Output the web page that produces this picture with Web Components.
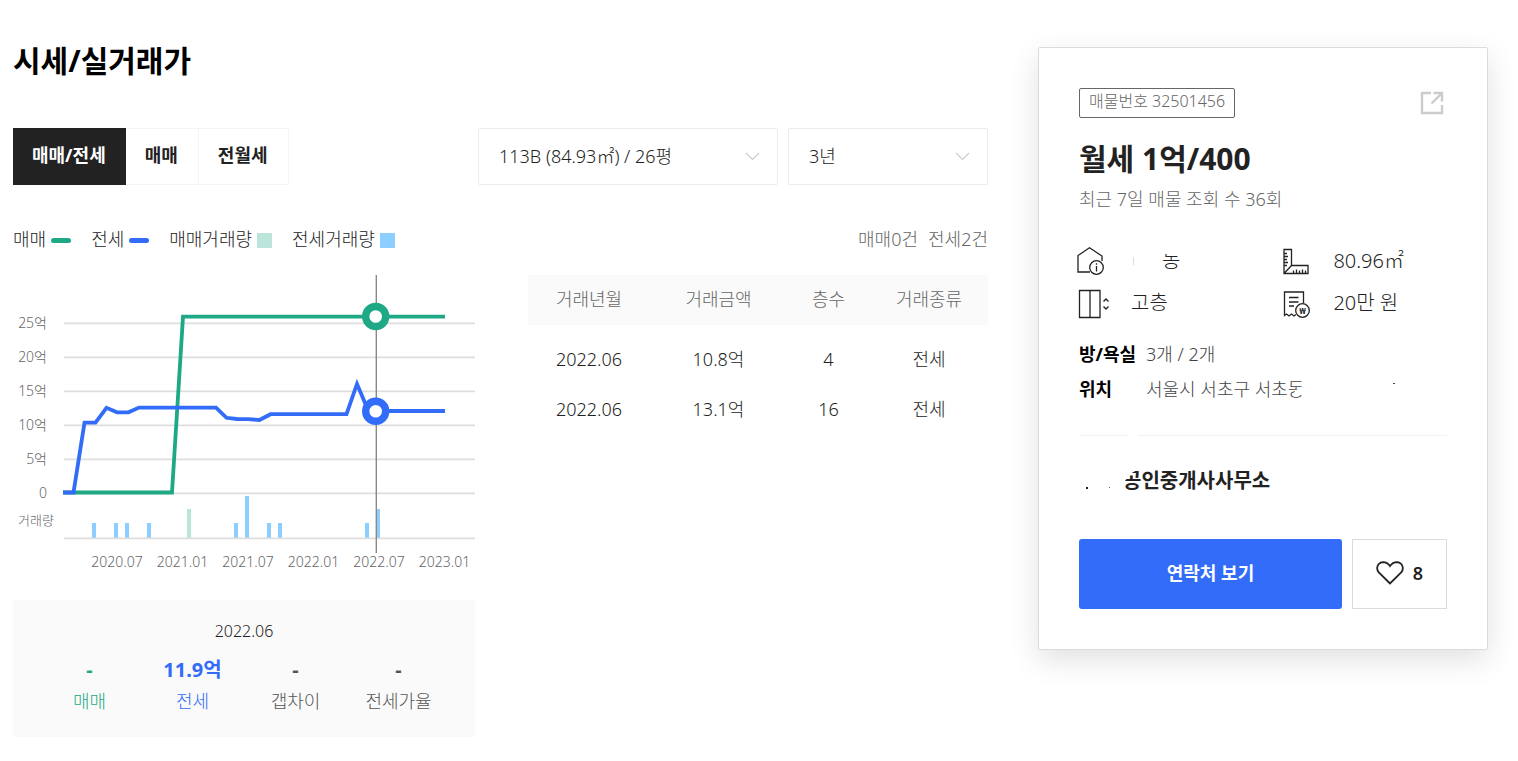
<!DOCTYPE html>
<html lang="ko">
<head>
<meta charset="utf-8">
<title>시세/실거래가</title>
<style>
	body {
		margin: 0;
		background: #fff;
		color: #222;
		font-family: "Noto Sans", "Noto Sans CJK KR", sans-serif;
		font-size: 18px;
		font-weight: 300;
		line-height: 26px;
	}
</style>
</head>
<body>
<estate-page>
	<price-section slot="main"></price-section>
	<listing-card slot="side"></listing-card>
</estate-page>

<script>
(function() {
	function makeTemplate(html) {
		const template = document.createElement("template");
		template.innerHTML = html;
		return template;
	}

	class BaseElement extends HTMLElement {
		constructor() {
			super();
			this._shadowRoot = this.attachShadow({ mode: "open" });
			this._shadowRoot.appendChild(this.constructor.template.content.cloneNode(true));
		}
	}

	// Page: wide content column and a listing card on the right
	class EstatePage extends BaseElement {}
	EstatePage.template = makeTemplate(`
		<style>
		:host {
			display: flex;
			align-items: flex-start;
			gap: 50px;
			padding: 0 30px 24px 13px;
		}
		main {
			flex: 1;
			min-width: 0;
			padding-top: 39px;
		}
		aside {
			flex: 0 0 450px;
			padding-top: 47px;
		}
		</style>
		<main><slot name="main"></slot></main>
		<aside><slot name="side"></slot></aside>
	`);

	class PriceSection extends BaseElement {}
	PriceSection.template = makeTemplate(`
		<style>
		:host { display: block; }
		h2 {
			margin: 0 0 45px;
			color: #000;
			font-size: 30px;
			font-weight: 700;
			line-height: 44px;
		}
		.filters, .selects, .info {
			display: flex;
			gap: 10px;
		}
		.filters, .info { justify-content: space-between; }
		.info { margin: 41px 0 23px; }
		.count {
			display: flex;
			gap: 10px;
			color: #666;
		}
		.body {
			display: grid;
			grid-template-columns: minmax(0, 1fr) 460px;
			align-items: start;
			gap: 53px;
		}
		</style>
		<h2>시세/실거래가</h2>
		<div class="filters">
			<trade-tabs></trade-tabs>
			<div class="selects">
				<select-box label="면적" value="113B (84.93㎡) / 26평" style="--box-width: 300px"></select-box>
				<select-box label="기간" value="3년" style="--box-width: 200px"></select-box>
			</div>
		</div>
		<div class="info">
			<chart-legend></chart-legend>
			<div class="count"><span>매매0건</span><span>전세2건</span></div>
		</div>
		<div class="body">
			<div>
				<price-chart></price-chart>
				<price-summary></price-summary>
			</div>
			<trade-table></trade-table>
		</div>
	`);

	class TradeTabs extends BaseElement {
		constructor() {
			super();
			const tabs = this._shadowRoot.querySelectorAll("button");
			tabs.forEach((tab) => {
				tab.addEventListener("click", () => {
					tabs.forEach((other) => other.setAttribute("aria-pressed", other === tab));
				});
			});
		}
	}
	TradeTabs.template = makeTemplate(`
		<style>
		:host { display: flex; }
		button {
			box-sizing: border-box;
			height: 57px;
			padding: 0 20px 4px 19px;
			border: 1px solid #f4f4f4;
			border-left: 0;
			background: #fff;
			color: #222;
			font: inherit;
			font-weight: 700;
			cursor: pointer;
		}
		button[aria-pressed="true"] {
			padding: 0 19px 4px;
			border-color: #222;
			background: #222;
			color: #fff;
		}
		</style>
		<button type="button" aria-pressed="true">매매/전세</button>
		<button type="button" aria-pressed="false">매매</button>
		<button type="button" aria-pressed="false">전월세</button>
	`);

	class SelectBox extends BaseElement {
		connectedCallback() {
			const select = this._shadowRoot.querySelector("select");
			select.setAttribute("aria-label", this.getAttribute("label"));
			select.querySelector("option").textContent = this.getAttribute("value");
		}
	}
	SelectBox.template = makeTemplate(`
		<style>
		:host {
			display: block;
			position: relative;
			width: var(--box-width);
		}
		select {
			appearance: none;
			box-sizing: border-box;
			width: 100%;
			height: 57px;
			padding: 0 44px 2px 20px;
			border: 1px solid #ebebeb;
			border-radius: 2px;
			background: #fff;
			color: #222;
			font: inherit;
		}
		svg {
			position: absolute;
			top: 24px;
			right: 18px;
			pointer-events: none;
		}
		</style>
		<select><option></option></select>
		<svg width="15" height="9" viewBox="0 0 15 9" fill="none" stroke="#ccc" stroke-width="1.2"><path d="M1 1l6.5 6.5L14 1"/></svg>
	`);

	class ChartLegend extends BaseElement {}
	ChartLegend.template = makeTemplate(`
		<style>
		:host {
			display: flex;
			gap: 20px;
		}
		span {
			display: flex;
			align-items: center;
			gap: 5px;
		}
		i {
			width: 15px;
			height: 15px;
			margin-top: 2px;
			background: var(--key);
		}
		.line {
			width: 20px;
			height: 5px;
			border-radius: 3px;
		}
		</style>
		<span>매매<i class="line" style="--key: #1ea885"></i></span>
		<span>전세<i class="line" style="--key: #326cf9"></i></span>
		<span>매매거래량<i style="--key: #bbe5da"></i></span>
		<span>전세거래량<i style="--key: #8bceff"></i></span>
	`);

	class PriceChart extends BaseElement {
		constructor() {
			super();
			const root = this._shadowRoot;
			const labels = ["25억", "20억", "15억", "10억", "5억", "0"];
			const months = ["2020.07", "2021.01", "2021.07", "2022.01", "2022.07", "2023.01"];
			// [x, height] of every volume bar
			const rent = [[79, 15], [101, 15], [112, 15], [134, 15], [221, 15], [232, 42], [254, 15], [265, 15], [352, 15], [363, 29]];

			root.querySelector(".rows").innerHTML = labels.map((label, i) => {
				const y = 48 + i * 34;
				return `<path d="M51 ${y + 0.4}H462"/><text x="34" y="${y + 5}">${label}</text>`;
			}).join("");
			root.querySelector(".months").innerHTML = months.map((month, i) =>
				`<text x="${104 + i * 65.5}" y="292">${month}</text>`
			).join("");
			root.querySelector(".rent").innerHTML = rent.map(([x, h]) =>
				`<rect x="${x}" y="${263 - h}" width="4" height="${h}"/>`
			).join("");
		}
	}
	PriceChart.template = makeTemplate(`
		<style>
		:host { display: block; }
		svg {
			display: block;
			width: 100%;
			height: auto;
			fill: none;
		}
		text {
			fill: #666;
			stroke: none;
			font-size: 14px;
		}
		.rows, .base { stroke: #dedede; stroke-width: 1.6; }
		.rows text { text-anchor: end; }
		.months text { text-anchor: middle; }
		.volume { font-size: 13px; }
		.rent { fill: #8bceff; }
		.sale { fill: #bbe5da; }
		.cursor { stroke: #888; stroke-width: 1.4; }
		.line { stroke-width: 3.8; }
		.green { stroke: #1ea885; }
		.blue { stroke: #326cf9; }
		circle { fill: #fff; stroke-width: 7.4; }
		</style>
		<svg viewBox="0 0 462 298" role="img" aria-label="시세">
			<g class="rows"></g>
			<text class="volume" x="5" y="250">거래량</text>
			<g class="rent"></g>
			<rect class="sale" x="174" y="234" width="4" height="29"/>
			<path class="base" d="M51 263.4H462"/>
			<path class="cursor" d="M363.3 0V278"/>
			<path class="line green" d="M50 217.5H159L170 41.6H432"/>
			<path class="line blue" d="M50 217.5H60.5L71.5 147.6H82.5L93.5 132.8L104 137.3H115.5L126 132.6H203L213.5 142.8L224 144L235 144.2L246.5 145L257.5 139.2H333.5L344 109L355 135L363 136H432"/>
			<circle class="green" cx="362.7" cy="41.5" r="10"/>
			<circle class="blue" cx="362.7" cy="136.3" r="10"/>
			<g class="months"></g>
		</svg>
	`);

	class PriceSummary extends BaseElement {}
	PriceSummary.template = makeTemplate(`
		<style>
		:host {
			display: block;
			margin-top: 27px;
			padding: 18px 25px 22px;
			background: #fafafa;
			color: #555;
			text-align: center;
		}
		p {
			margin: 0;
			color: #222;
			font-size: 16px;
		}
		dl {
			display: grid;
			grid-template-columns: repeat(4, 1fr);
			margin: 8px 0 0;
		}
		div {
			display: flex;
			flex-direction: column-reverse;
		}
		dt { line-height: 28px; }
		dd {
			margin: 0;
			font-size: 20px;
			font-weight: 700;
			line-height: 35px;
		}
		.sale { color: #1ea885; }
		.rent { color: #326cf9; }
		</style>
		<p>2022.06</p>
		<dl>
			<div class="sale"><dt>매매</dt><dd>-</dd></div>
			<div class="rent"><dt>전세</dt><dd>11.9억</dd></div>
			<div><dt>갭차이</dt><dd>-</dd></div>
			<div><dt>전세가율</dt><dd>-</dd></div>
		</dl>
	`);

	class TradeTable extends BaseElement {
		constructor() {
			super();
			const trades = [
				["2022.06", "10.8억", "4", "전세"],
				["2022.06", "13.1억", "16", "전세"]
			];
			this._shadowRoot.querySelector("tbody").innerHTML = trades.map((trade) =>
				`<tr>${trade.map((cell) => `<td>${cell}</td>`).join("")}</tr>`
			).join("");
		}
	}
	TradeTable.template = makeTemplate(`
		<style>
		:host { display: block; }
		table {
			width: 100%;
			border-collapse: collapse;
			table-layout: fixed;
			text-align: center;
		}
		th, td {
			height: 48px;
			padding: 0 0 2px;
		}
		th {
			background: #fafafa;
			color: #666;
			font-weight: 300;
		}
		th:nth-child(1) { width: 122px; }
		th:nth-child(2) { width: 137px; }
		th:nth-child(3) { width: 83px; }
		tbody::before {
			content: "";
			display: block;
			height: 10px;
		}
		</style>
		<table>
			<thead><tr><th>거래년월</th><th>거래금액</th><th>층수</th><th>거래종류</th></tr></thead>
			<tbody></tbody>
		</table>
	`);

	// One icon with its value
	class SpecItem extends BaseElement {}
	SpecItem.template = makeTemplate(`
		<style>
		:host {
			display: flex;
			align-items: center;
			height: 42px;
			font-size: 20px;
		}
		.icon {
			display: flex;
			width: 54px;
			margin-left: -2px;
		}
		</style>
		<span class="icon"><slot name="icon"></slot></span>
		<span class="value"><slot></slot></span>
	`);

	class ListingCard extends BaseElement {
		constructor() {
			super();
			const like = this._shadowRoot.querySelector(".like");
			like.addEventListener("click", () => {
				const on = like.getAttribute("aria-pressed") !== "true";
				like.setAttribute("aria-pressed", on);
				like.querySelector("span").textContent = on ? 9 : 8;
			});
		}
	}
	ListingCard.template = makeTemplate(`
		<style>
		:host {
			display: block;
			padding: 40px;
			border: 1px solid #dcdcdc;
			border-radius: 2px;
			background: #fff;
			box-shadow: 0 10px 30px rgba(0, 0, 0, 0.12);
			box-sizing: border-box;
		}
		header {
			display: flex;
			align-items: center;
			justify-content: space-between;
		}
		.number {
			box-sizing: border-box;
			height: 30px;
			padding: 0 9px;
			border: 1px solid #666;
			border-radius: 2px;
			color: #666;
			font-size: 16px;
			line-height: 25px;
		}
		button {
			padding: 0;
			border: 0;
			background: none;
			color: inherit;
			font: inherit;
			cursor: pointer;
		}
		.open {
			height: 24px;
			margin-right: 3px;
		}
		h3 {
			margin: 19px 0 5px;
			font-size: 30px;
			font-weight: 700;
			line-height: 44px;
		}
		.views {
			margin: 0;
			color: #666;
		}
		.specs {
			display: grid;
			grid-template-columns: 55% 45%;
			margin-top: 28px;
		}
		.specs svg {
			width: 34px;
			height: 32px;
			fill: none;
			stroke: #222;
			stroke-width: 1.3;
		}
		.specs text {
			fill: #222;
			stroke: none;
			font-size: 9px;
			font-weight: 700;
			text-anchor: middle;
		}
		.part {
			display: inline-block;
			padding-left: 31px;
			background: linear-gradient(#ddd, #ddd) 2px 9px / 1px 8px no-repeat;
			clip-path: inset(6px 0 0 0);
		}
		dl {
			display: grid;
			grid-template-columns: 67px 1fr;
			margin: 13px 0 28px;
			line-height: 35px;
		}
		dt {
			color: #000;
			font-weight: 700;
		}
		dd { margin: 0; color: #444; }
		.cut {
			display: inline-block;
			clip-path: polygon(0 0, 15px 0, 15px 16px, 7px 18px, 7px 23px, 14px 23px, 15px 35px, 0 35px);
		}
		.address { background: linear-gradient(#444, #444) 247px 11px / 2px 1px no-repeat; }
		hr {
			height: 1px;
			margin: 0;
			border: 0;
			background: linear-gradient(90deg, #f2f2f2 49px, #fff 49px 59px, #f2f2f2 59px);
		}
		.agent {
			margin: 32px 0 45px;
			padding-left: 44px;
			background:
				linear-gradient(#222, #222) 7px 19px / 2px 2px no-repeat,
				linear-gradient(#666, #666) 30px 19px / 1px 1px no-repeat;
			font-size: 20px;
			font-weight: 700;
		}
		.agent span {
			display: inline-block;
			clip-path: polygon(0 60%, 8px 20%, 100% 0, 100% 100%, 0 100%);
		}
		footer {
			display: flex;
			gap: 10px;
		}
		.contact {
			flex: 1;
			height: 70px;
			padding-bottom: 3px;
			border-radius: 3px;
			background: #326cf9;
			color: #fff;
			font-weight: 700;
		}
		.like {
			display: flex;
			align-items: center;
			justify-content: center;
			gap: 9px;
			width: 95px;
			padding-bottom: 3px;
			border: 1px solid #dcdcdc;
			font-weight: 600;
		}
		</style>
		<header>
			<span class="number">매물번호 32501456</span>
			<button class="open" type="button" aria-label="새 창">
				<svg width="24" height="24" viewBox="0 0 24 24" fill="none" stroke="#ccc" stroke-width="2.4"><path d="M11 2H2v20h20v-8M13.500 2H22v8.500M22 2L11.500 12.500"/></svg>
			</button>
		</header>
		<h3>월세 1억/400</h3>
		<p class="views">최근 7일 매물 조회 수 36회</p>
		<div class="specs">
			<spec-item>
				<svg slot="icon" viewBox="0 0 34 32"><path d="M13 27H1V10.500L12.500 2.800 25 11v5"/><circle cx="19.500" cy="22.500" r="6.800"/><path d="M19.500 21v5.500M19.500 18.300v1.400"/></svg>
				<span class="part">농</span>
			</spec-item>
			<spec-item>
				<svg slot="icon" viewBox="0 0 34 32"><path d="M5 4.500h7.500v16H29v8H5zM5 28.500l7.500-8M5 8.500h3M5 11.500h4M5 14.500h3M5 17.500h4M5 20.500h3M14.500 28.500v-3M17.500 28.500v-4M20.500 28.500v-3M23.500 28.500v-4M26.500 28.500v-3"/></svg>
				80.96㎡
			</spec-item>
			<spec-item>
				<svg slot="icon" viewBox="0 0 34 32"><path d="M2.500 3.500h20.500v27H2.500zM13 3.500v27M26.500 14.500l2.500-2.500 2.500 2.500M26.500 19.500l2.500 2.500 2.500-2.500"/></svg>
				고층
			</spec-item>
			<spec-item>
				<svg slot="icon" viewBox="0 0 34 32"><path d="M24.500 16V5H5.500v23.500l2-1.500 2.500 2 2.500-2 2.500 2 2-1.500M10 10.500h9.500M10 15h9.500M10 19h5"/><circle cx="23.500" cy="23.500" r="6.800"/><text x="23.500" y="27">₩</text></svg>
				20만 원
			</spec-item>
		</div>
		<dl>
			<dt>방/욕실</dt><dd>3개 / 2개</dd>
			<dt>위치</dt><dd class="address">서울시 서초구 서초<span class="cut">동</span></dd>
		</dl>
		<hr>
		<p class="agent"><span>공</span>인중개사사무소</p>
		<footer>
			<button class="contact" type="button">연락처 보기</button>
			<button class="like" type="button" aria-label="관심 8" aria-pressed="false">
				<svg width="28" height="24" viewBox="0 0 28 24" fill="none" stroke="#222" stroke-width="1.800"><path d="M14 22.500L2.800 11.500C-.5 7.500 1.500 1.500 7.300 1.200c3 0 5 1.500 6.700 3.900 1.700-2.400 3.700-3.900 6.700-3.900 5.800.3 7.800 6.300 4.500 10.300z"/></svg>
				<span>8</span>
			</button>
		</footer>
	`);

	customElements.define("trade-tabs", TradeTabs);
	customElements.define("select-box", SelectBox);
	customElements.define("chart-legend", ChartLegend);
	customElements.define("price-chart", PriceChart);
	customElements.define("price-summary", PriceSummary);
	customElements.define("trade-table", TradeTable);
	customElements.define("price-section", PriceSection);
	customElements.define("spec-item", SpecItem);
	customElements.define("listing-card", ListingCard);
	customElements.define("estate-page", EstatePage);
})();
</script>
</body>
</html>
